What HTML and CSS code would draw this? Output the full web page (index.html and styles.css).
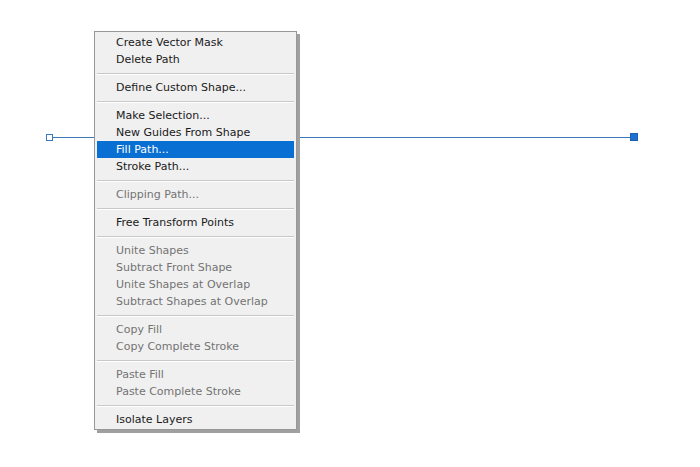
FILE: index.html
```html
<!DOCTYPE html>
<html lang="en">
<head>
<meta charset="utf-8">
<title>Path context menu</title>
<link rel="stylesheet" href="styles.css">
</head>
<body>
<div class="canvas">
  <div class="path-line"></div>
  <div class="anchor anchor-open"></div>
  <div class="anchor anchor-selected"></div>

  <ul class="menu">
    <li class="item">Create Vector Mask</li>
    <li class="item">Delete Path</li>
    <li class="sep"></li>
    <li class="item">Define Custom Shape...</li>
    <li class="sep"></li>
    <li class="item">Make Selection...</li>
    <li class="item">New Guides From Shape</li>
    <li class="item active">Fill Path...</li>
    <li class="item">Stroke Path...</li>
    <li class="sep"></li>
    <li class="item disabled">Clipping Path...</li>
    <li class="sep"></li>
    <li class="item">Free Transform Points</li>
    <li class="sep"></li>
    <li class="item disabled">Unite Shapes</li>
    <li class="item disabled">Subtract Front Shape</li>
    <li class="item disabled">Unite Shapes at Overlap</li>
    <li class="item disabled">Subtract Shapes at Overlap</li>
    <li class="sep"></li>
    <li class="item disabled">Copy Fill</li>
    <li class="item disabled">Copy Complete Stroke</li>
    <li class="sep"></li>
    <li class="item disabled">Paste Fill</li>
    <li class="item disabled">Paste Complete Stroke</li>
    <li class="sep"></li>
    <li class="item">Isolate Layers</li>
  </ul>
</div>
</body>
</html>
```

FILE: styles.css
```css
html, body {
  margin: 0;
  padding: 0;
  background: #ffffff;
}

.canvas {
  position: relative;
  width: 700px;
  height: 467px;
  overflow: hidden;
  font-family: "DejaVu Sans", Verdana, sans-serif;
}

/* straight path segment between two anchors */
.path-line {
  position: absolute;
  left: 52px;
  top: 137px;
  width: 578px;
  height: 1px;
  background: #3a78b8;
}

.anchor {
  position: absolute;
  box-sizing: border-box;
}

.anchor-open {
  left: 46px;
  top: 134px;
  width: 7px;
  height: 7px;
  border: 1px solid #3a78b8;
  background: #ffffff;
}

.anchor-selected {
  left: 630px;
  top: 133px;
  width: 8px;
  height: 8px;
  background: #1f6fd0;
  border: 1px solid #1a5fb4;
}

/* context menu */
.menu {
  position: absolute;
  left: 94px;
  top: 31px;
  width: 203px;
  box-sizing: border-box;
  margin: 0;
  padding: 2px 2px 1px 2px;
  list-style: none;
  background: #f0f0f0;
  border: 1px solid #979797;
  box-shadow: 3px 3px 0 0 #a0a0a0;
}

.item {
  height: 17px;
  line-height: 17px;
  padding-left: 19px;
  font-size: 11px;
  color: #1a1a1a;
  white-space: nowrap;
}

.item.disabled {
  color: #737373;
}

.item.active {
  background: #0a6fd2;
  color: #ffffff;
}

.sep {
  height: 0;
  margin: 5px 0 4px 0;
  border-top: 1px solid #c8c8c8;
  border-bottom: 1px solid #ffffff;
}
```
